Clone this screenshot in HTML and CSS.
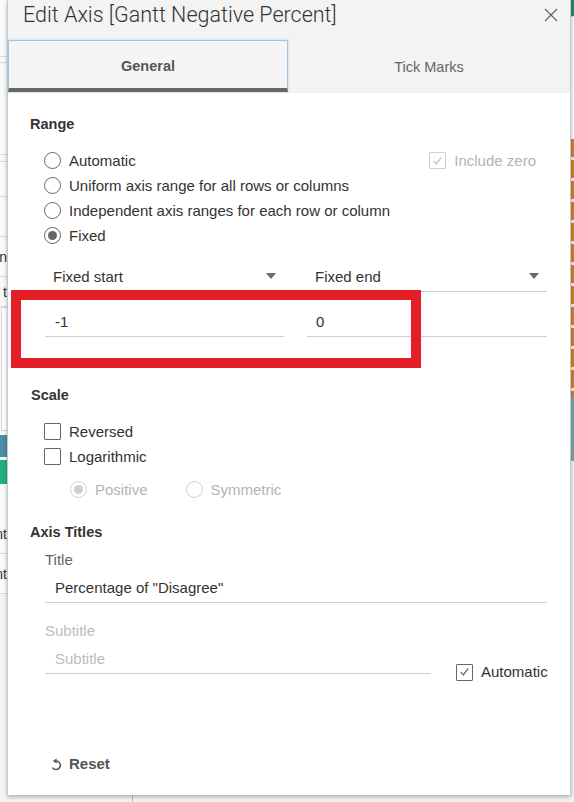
FILE: index.html
```html
<!DOCTYPE html>
<html lang="en">
<head>
<meta charset="utf-8">
<title>Edit Axis</title>
<link rel="stylesheet" href="styles.css">
</head>
<body>
<div class="page">
  <div class="sheet-left">
    <div class="sl-row h57"></div>
    <div class="sl-row h6"></div>
    <div class="sl-row h92"></div>
    <div class="sl-row h7"></div>
    <div class="sl-row h35"></div>
    <div class="sl-row h40"></div>
    <div class="sl-row h40 txt">n</div>
    <div class="sl-row h30 txt">t</div>
    <div class="sl-box"></div>
    <div class="sl-teal"></div>
    <div class="sl-green"></div>
    <div class="sl-row h30 plain"></div>
    <div class="sl-row h40 txt">nt</div>
    <div class="sl-row h40 txt">nt</div>
    <div class="sl-rest"></div>
  </div>

  <div class="center">
    <div class="dialog">
      <div class="dlg-head">
        <div class="title-row">
          <h1 class="title">Edit Axis [Gantt Negative Percent]</h1>
          <button class="close" aria-label="Close">
            <svg width="14" height="14" viewBox="0 0 14 14"><path d="M1 1 L13 13 M13 1 L1 13" stroke="#666" stroke-width="1.2" fill="none"/></svg>
          </button>
        </div>
        <div class="tabs">
          <div class="tab active">General</div>
          <div class="tab">Tick Marks</div>
        </div>
      </div>

      <div class="dlg-body">
        <div class="section-title">Range</div>
        <div class="options">
          <div class="opt-row">
            <label class="opt"><span class="radio"></span>Automatic</label>
            <label class="opt disabled incl"><span class="check checked"><svg width="16" height="16" viewBox="0 0 16 16"><path d="M4 8.2 L6.8 11 L12 4.2" stroke="#bbb" stroke-width="1.2" fill="none"/></svg></span>Include zero</label>
          </div>
          <div class="opt-row"><label class="opt"><span class="radio"></span>Uniform axis range for all rows or columns</label></div>
          <div class="opt-row"><label class="opt"><span class="radio"></span>Independent axis ranges for each row or column</label></div>
          <div class="opt-row"><label class="opt"><span class="radio on"></span>Fixed</label></div>
        </div>

        <div class="pair dropdowns">
          <div class="dropdown"><span>Fixed start</span><span class="caret"></span></div>
          <div class="dropdown"><span>Fixed end</span><span class="caret"></span></div>
        </div>
        <div class="pair inputs">
          <div class="field">-1</div>
          <div class="field">0</div>
        </div>

        <div class="section-title scale">Scale</div>
        <div class="options">
          <div class="opt-row"><label class="opt"><span class="check"></span>Reversed</label></div>
          <div class="opt-row"><label class="opt"><span class="check"></span>Logarithmic</label></div>
        </div>
        <div class="sub-options">
          <label class="opt disabled"><span class="radio on"></span>Positive</label>
          <label class="opt disabled sym"><span class="radio"></span>Symmetric</label>
        </div>

        <div class="section-title axis">Axis Titles</div>
        <div class="label">Title</div>
        <div class="field wide">Percentage of "Disagree"</div>
        <div class="label muted sub">Subtitle</div>
        <div class="subtitle-row">
          <div class="field placeholder">Subtitle</div>
          <label class="opt auto"><span class="check checked"><svg width="16" height="16" viewBox="0 0 16 16"><path d="M4 8.2 L6.8 11 L12 4.2" stroke="#555" stroke-width="1.2" fill="none"/></svg></span>Automatic</label>
        </div>
      </div>

      <div class="dlg-foot">
        <svg class="reset-icon" width="12" height="13" viewBox="0 0 12 13"><path d="M6 3 A4.3 4.3 0 1 1 2.4 9.6" stroke="#555" stroke-width="1.5" fill="none"/><path d="M2.8 3 L6.6 0.6 L6.6 5.4 Z" fill="#555"/></svg>
        <span>Reset</span>
      </div>

      <div class="highlight"></div>
    </div>
    <div class="below"></div>
  </div>

  <div class="sheet-right">
    <div class="sr-top"></div>
    <div class="sr-gap"></div>
    <div class="sr-orange"></div>
    <div class="sr-teal"></div>
    <div class="sr-rest"></div>
  </div>
</div>
</body>
</html>
```

FILE: styles.css
```css
* { box-sizing: border-box; }

html, body {
  margin: 0;
  padding: 0;
}

body {
  width: 574px;
  height: 802px;
  overflow: hidden;
  font-family: "Liberation Sans", Arial, sans-serif;
  font-size: 15px;
  color: #333;
  background: #f4f4f4;
}

.page {
  display: flex;
  height: 802px;
}

/* underlying worksheet, left edge */
.sheet-left {
  width: 7px;
  display: flex;
  flex-direction: column;
  background: #fafafa;
  overflow: hidden;
}
.sl-row {
  border-bottom: 1px solid #d9d9d9;
  font-size: 14px;
  line-height: 1;
  color: #333;
  display: flex;
  align-items: center;
  justify-content: flex-end;
  white-space: nowrap;
}
.sl-row.plain { border-bottom: none; }
.h57 { height: 57px; }
.h6 { height: 6px; }
.h92 { height: 92px; }
.h7 { height: 7px; }
.h35 { height: 35px; }
.h40 { height: 40px; }
.h30 { height: 30px; }
.sl-box {
  height: 124px;
  margin-left: 1px;
  border: 1px solid #d5d5d5;
  border-right: none;
  background: #fff;
}
.sl-teal { height: 22px; margin-top: 4px; background: #4b8ea5; }
.sl-green { height: 24px; margin-top: 3px; background: #24b07e; }
.sl-rest { flex: 1; background: #f4f4f4; }

.center {
  width: 564px;
  display: flex;
  flex-direction: column;
}

.dialog {
  position: relative;
  z-index: 1;
  height: 795px;
  display: flex;
  flex-direction: column;
  background: #fff;
  border-left: 1px solid #c8c8c8;
  border-right: 1px solid #c8c8c8;
  box-shadow: 0 2px 4px rgba(0, 0, 0, 0.28);
}

.below {
  flex: 1;
  background: #f3f3f3;
  margin-left: 125px;
  border-left: 1px solid #bdbdbd;
}

/* header */
.dlg-head {
  background: #f3f3f3;
  padding-bottom: 1px;
}
.title-row {
  height: 40px;
  display: flex;
  justify-content: space-between;
  align-items: flex-start;
  padding: 0 12px 0 15px;
}
.title {
  margin: 0;
  font-family: Roboto, "Liberation Sans", sans-serif;
  font-weight: 300;
  font-size: 21.5px;
  line-height: 30px;
  color: #333;
}
.close {
  margin-top: 8px;
  padding: 0;
  border: none;
  background: none;
  width: 14px;
  height: 14px;
  display: flex;
}

.tabs {
  display: grid;
  grid-template-columns: 280px 1fr;
  height: 52px;
}
.tab {
  display: flex;
  align-items: center;
  justify-content: center;
  font-size: 14.5px;
  color: #666;
  padding-top: 2px;
}
.tab.active {
  font-weight: bold;
  color: #555;
  background: #f5f5f5;
  border: 1px solid #9fc4e2;
  border-bottom: 4px solid #666;
  box-shadow: 0 0 2px rgba(120, 170, 210, 0.5);
}

/* body */
.dlg-body {
  padding: 0 23px 0 22px;
}
.section-title {
  margin-top: 21px;
  font-weight: bold;
  font-size: 14.5px;
  line-height: 20px;
  color: #333;
}
.section-title.scale { margin-top: 48px; padding-left: 1px; }
.section-title.axis { margin-top: 20px; }

.options { margin-top: 14px; }
.opt-row {
  height: 25px;
  display: flex;
  align-items: center;
  justify-content: space-between;
  padding-left: 14px;
}
.opt {
  display: flex;
  align-items: center;
  gap: 8px;
  line-height: 20px;
  color: #333;
  white-space: nowrap;
}
.opt.disabled { color: #b4b4b4; }
.opt.incl { margin-right: 11px; }

.radio {
  width: 17px;
  height: 17px;
  border: 1px solid #666;
  border-radius: 50%;
  background: #fff;
  display: flex;
  align-items: center;
  justify-content: center;
  flex: none;
}
.radio.on::after {
  content: "";
  width: 9px;
  height: 9px;
  border-radius: 50%;
  background: #666;
}
.disabled .radio { border-color: #cfcfcf; }
.disabled .radio.on::after { background: #cfcfcf; }

.check {
  width: 17px;
  height: 17px;
  border: 1px solid #666;
  border-radius: 1px;
  background: #fff;
  display: flex;
  align-items: center;
  justify-content: center;
  flex: none;
}
.check svg { display: block; }
.disabled .check { border-color: #cfcfcf; }

.pair {
  display: grid;
  grid-template-columns: 239px 240px;
  column-gap: 23px;
  margin-left: 15px;
}
.dropdowns { margin-top: 13px; }
.inputs { margin-top: 15px; }

.dropdown {
  height: 31px;
  border-bottom: 1px solid #cfcfcf;
  display: flex;
  align-items: center;
  justify-content: space-between;
  padding: 0 8px 0 8px;
  color: #333;
}
.caret {
  width: 0;
  height: 0;
  border-left: 5px solid transparent;
  border-right: 5px solid transparent;
  border-top: 6px solid #6a6a6a;
}

.field {
  height: 30px;
  border-bottom: 1px solid #cfcfcf;
  display: flex;
  align-items: center;
  padding-left: 10px;
  color: #333;
}
.inputs .field:last-child { padding-left: 9px; }

.sub-options {
  margin-top: 8px;
  height: 25px;
  display: flex;
  align-items: center;
  padding-left: 40px;
}
.sym { margin-left: 38px; }

.label {
  margin-top: 8px;
  padding-left: 15px;
  line-height: 20px;
  color: #666;
}
.label.sub { margin-top: 18px; }
.muted { color: #bdbdbd; }

.field.wide {
  margin-top: 3px;
  margin-left: 15px;
}

.subtitle-row {
  margin-top: 3px;
  margin-left: 15px;
  height: 30px;
  display: flex;
  align-items: flex-end;
  gap: 25px;
}
.field.placeholder {
  width: 386px;
  flex: none;
  color: #bdbdbd;
}
.opt.auto {
  margin-bottom: -8px;
}

/* footer */
.dlg-foot {
  margin-top: auto;
  padding: 0 0 21px 42px;
  display: flex;
  align-items: center;
  gap: 7px;
  font-weight: bold;
  font-size: 15px;
  line-height: 20px;
  color: #555;
}
.reset-icon { display: block; }

/* annotation */
.highlight {
  position: absolute;
  left: 3px;
  top: 290px;
  width: 410px;
  height: 78px;
  border: 10px solid #e41e26;
  pointer-events: none;
}

/* underlying worksheet, right edge */
.sheet-right {
  width: 3px;
  display: flex;
  flex-direction: column;
  background: #fafafa;
}
.sr-top { height: 16px; background: #1f8a6c; }
.sr-gap {
  height: 123px;
  border-top: 1px solid #cfcfcf;
}
.sr-orange {
  height: 258px;
  background: repeating-linear-gradient(to bottom, #cf7e2f 0, #cf7e2f 18px, #f6e9dc 18px, #f6e9dc 21px);
}
.sr-teal { height: 64px; background: #76a4ad; }
.sr-rest { flex: 1; background: #f3f3f3; }
```
